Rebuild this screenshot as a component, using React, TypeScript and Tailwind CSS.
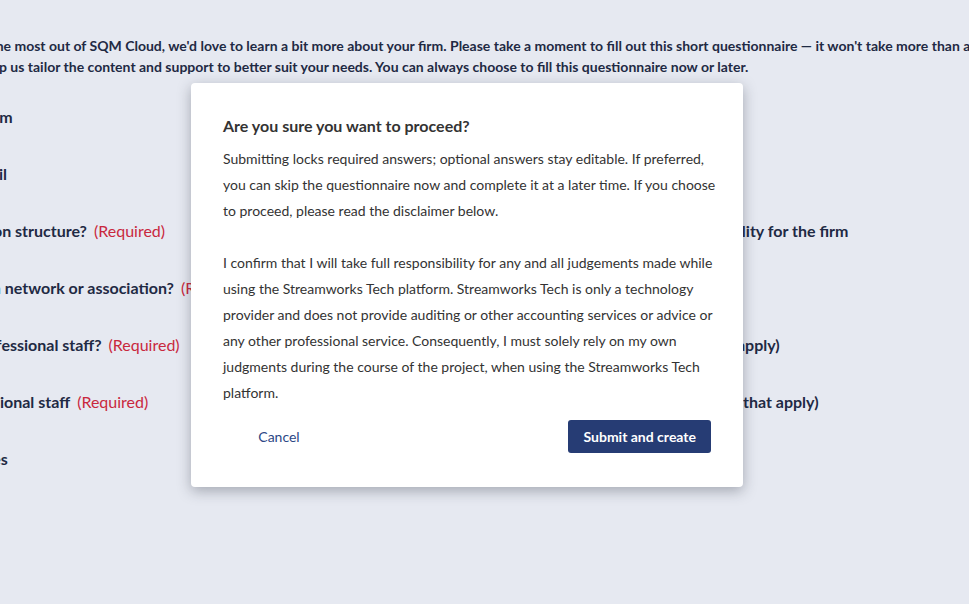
import { ReactNode } from 'react'

const questions: { left: string; leftReq?: boolean; right?: string }[] = [
  { left: 'Name of the firm', right: 'Firm type' },
  { left: 'Company e-mail', right: 'Country' },
  { left: 'The organisation structure?', leftReq: true, right: 'Who holds ultimate responsibility for the firm' },
  { left: 'Is your firm in a network or association?', leftReq: true, right: 'Year founded' },
  { left: 'Number of professional staff?', leftReq: true, right: "Firm's services (Select all that apply)" },
  { left: 'Trainee professional staff', leftReq: true, right: 'Industries you serve (Select all that apply)' },
  { left: 'Client industries' },
]

function Question({ text, required }: { text?: string; required?: boolean }) {
  if (!text) return <div />
  return (
    <div className="whitespace-nowrap text-[16px] font-bold leading-[24px] text-[#1f2a44]">
      {text}
      {required && <span className="ml-[7px] font-normal text-[#c9283e]">(Required)</span>}
    </div>
  )
}

function ModalButton({ primary, children }: { primary?: boolean; children: ReactNode }) {
  if (primary) {
    return (
      <button className="h-[33px] rounded-[3px] bg-[#263c74] px-[15px] text-[14px] font-bold text-white">
        {children}
      </button>
    )
  }
  return (
    <button className="h-[33px] w-[112px] rounded-[3px] text-[14px] text-[#2c4785]">{children}</button>
  )
}

export default function App() {
  return (
    <div className="relative h-[604px] overflow-hidden bg-[#e6e9f1] font-['Lato','Noto_Sans',sans-serif]">
      <div className="-ml-[108px] w-[1400px] pt-[35px]">
        <div className="ml-[57px] whitespace-nowrap text-[14px] font-bold leading-[21px] text-[#1f2a44]">
          <p>
            To get the most out of SQM Cloud, we'd love to learn a bit more about your firm. Please take a moment to fill out this short questionnaire — it won't take more than a couple of minutes and
          </p>
          <p className="ml-[6px]">
            will help us tailor the content and support to better suit your needs. You can always choose to fill this questionnaire now or later.
          </p>
        </div>
        <div className="mt-[28px] grid grid-cols-[633px_1fr] gap-y-[33px]">
          {questions.map((q, i) => (
            <div key={i} className="contents">
              <Question text={q.left} required={q.leftReq} />
              <Question text={q.right} />
            </div>
          ))}
        </div>
      </div>

      <div className="absolute left-[191px] top-[83px] w-[552px] rounded-[4px] bg-white pb-[34px] pl-8 pr-8 pt-[31px] shadow-[0_4px_14px_rgba(40,45,60,0.35)]">
        <h2 className="text-[16px] font-bold leading-[24px] text-[#333333]">Are you sure you want to proceed?</h2>
        <div className="-mr-[8px] mt-[8px] text-[14px] leading-[26px] text-[#333333]">
          <p>
            Submitting locks required answers; optional answers stay editable. If preferred, you can skip the questionnaire now and complete it at a later time. If you choose to proceed, please read the disclaimer below.
          </p>
          <p className="mt-[26px]">
            I confirm that I will take full responsibility for any and all judgements made while using the Streamworks Tech platform. Streamworks Tech is only a technology provider and does not provide auditing or other accounting services or advice or any other professional service. Consequently, I must solely rely on my own judgments during the course of the project, when using the Streamworks Tech platform.
          </p>
        </div>
        <div className="mt-[14px] flex items-center justify-between">
          <ModalButton>Cancel</ModalButton>
          <ModalButton primary>Submit and create</ModalButton>
        </div>
      </div>
    </div>
  )
}
